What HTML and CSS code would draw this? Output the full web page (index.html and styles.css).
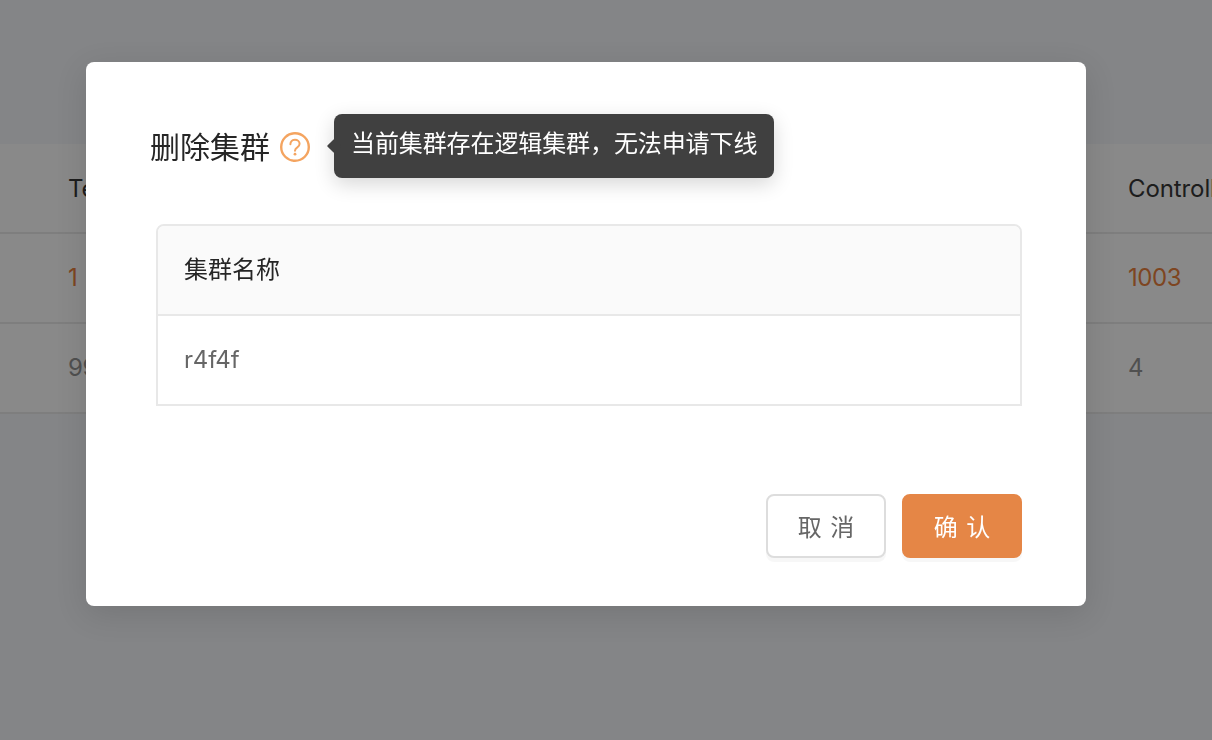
FILE: index.html
```html
<!DOCTYPE html>
<html lang="zh">
<head>
<meta charset="utf-8">
<title>删除集群</title>
<link rel="stylesheet" href="styles.css">
</head>
<body>
<main class="page">
  <div class="bg-table">
    <div class="bg-row bg-head"><span>Tenant</span><span class="bg-last">Controller</span></div>
    <div class="bg-row bg-link"><span>1</span><span class="bg-last">1003</span></div>
    <div class="bg-row bg-plain"><span>9999</span><span class="bg-last">4</span></div>
  </div>
</main>
<div class="overlay"></div>
<section class="modal">
  <header class="modal-title">
    <h2 class="title-text">删除集群</h2>
    <svg class="help-icon" viewBox="0 0 30 30" fill="none" stroke="#f4a460" aria-hidden="true">
      <circle cx="15" cy="15" r="13.8" stroke-width="2.4"/>
      <path d="M10.4 12.2c0-2.8 2.1-4.4 4.6-4.4s4.6 1.7 4.6 4c0 1.8-1 2.7-2.3 3.6-1.4.9-2.3 1.6-2.3 3.4" stroke-width="2" stroke-linecap="round"/>
      <circle cx="15" cy="22.2" r="1.4" fill="#f4a460" stroke="none"/>
    </svg>
  </header>
  <div class="tooltip">当前集群存在逻辑集群，无法申请下线</div>
  <div class="cluster-table">
    <div class="cluster-head">集群名称</div>
    <div class="cluster-cell">r4f4f</div>
  </div>
  <footer class="modal-actions">
    <button class="btn btn-cancel">取 消</button>
    <button class="btn btn-ok">确 认</button>
  </footer>
</section>
</body>
</html>
```
FILE: styles.css
```css
* { box-sizing: border-box; }
html, body { margin: 0; height: 100%; overflow: hidden; }
body {
  font-family: Inter, "Liberation Sans", "Noto Sans CJK SC", sans-serif;
  background: #f5f7fa;
}
.page { padding-top: 144px; }
.bg-table { width: 100%; background: #fff; }
.bg-row {
  display: flex;
  justify-content: space-between;
  align-items: center;
  height: 90px;
  padding-left: 68px;
  border-bottom: 2px solid #e8e8e8;
  font-size: 24px;
  letter-spacing: -0.4px;
  overflow: hidden;
  white-space: nowrap;
}
.bg-last { width: 84px; flex: none; }
.bg-head { color: #262626; letter-spacing: -0.1px; }
.bg-link { color: #e8772e; padding-bottom: 2px; }
.bg-plain { color: #8c8c8c; padding-bottom: 2px; }
.overlay {
  position: fixed;
  inset: 0;
  background: rgba(20, 20, 20, 0.5);
}
.modal {
  position: absolute;
  left: 86px;
  top: 62px;
  width: 1000px;
  height: 544px;
  display: flex;
  flex-direction: column;
  padding: 70px 64px 48px 64px;
  background: #fff;
  border-radius: 8px;
  box-shadow: 0 8px 32px rgba(0, 0, 0, 0.12);
}
.modal-title { display: flex; align-items: center; gap: 10px; height: 30px; }
.title-text {
  margin: 0;
  font-size: 30px;
  line-height: 30px;
  font-weight: 400;
  color: #262626;
}
.help-icon { width: 30px; height: 30px; flex: none; }
.tooltip {
  position: absolute;
  left: 248px;
  top: 52px;
  width: 440px;
  height: 64px;
  padding-left: 17px;
  border-radius: 8px;
  background: #404040;
  color: #fff;
  font-size: 24px;
  letter-spacing: -0.1px;
  line-height: 60px;
  white-space: nowrap;
  box-shadow: 0 6px 20px rgba(0, 0, 0, 0.16);
}
.tooltip::before {
  content: "";
  position: absolute;
  left: -5px;
  top: 27px;
  width: 10px;
  height: 10px;
  background: #404040;
  transform: rotate(45deg);
  border-radius: 1px;
}
.cluster-table {
  margin: 62px 0 0 6px;
  width: 866px;
  height: 182px;
  border: 2px solid #e8e8e8;
  border-radius: 8px 8px 0 0;
  font-size: 24px;
}
.cluster-head {
  height: 90px;
  padding-left: 26px;
  line-height: 88px;
  background: #fafafa;
  color: #262626;
  border-bottom: 2px solid #e8e8e8;
  border-radius: 6px 6px 0 0;
}
.cluster-cell {
  height: 88px;
  padding-left: 26px;
  letter-spacing: -0.2px;
  line-height: 88px;
  color: #666;
}
.modal-actions {
  display: flex;
  justify-content: flex-end;
  gap: 16px;
  margin-top: auto;
}
.btn {
  width: 120px;
  height: 64px;
  padding: 0 0 2px;
  border-radius: 8px;
  font: inherit;
  font-size: 24px;
  word-spacing: 2px;
  box-shadow: 0 4px 0 rgba(0, 0, 0, 0.03);
}
.btn-cancel { background: #fff; border: 2px solid #ddd; color: #666; }
.btn-ok { background: #e58646; border: 2px solid #e58646; color: #fff; }
```
